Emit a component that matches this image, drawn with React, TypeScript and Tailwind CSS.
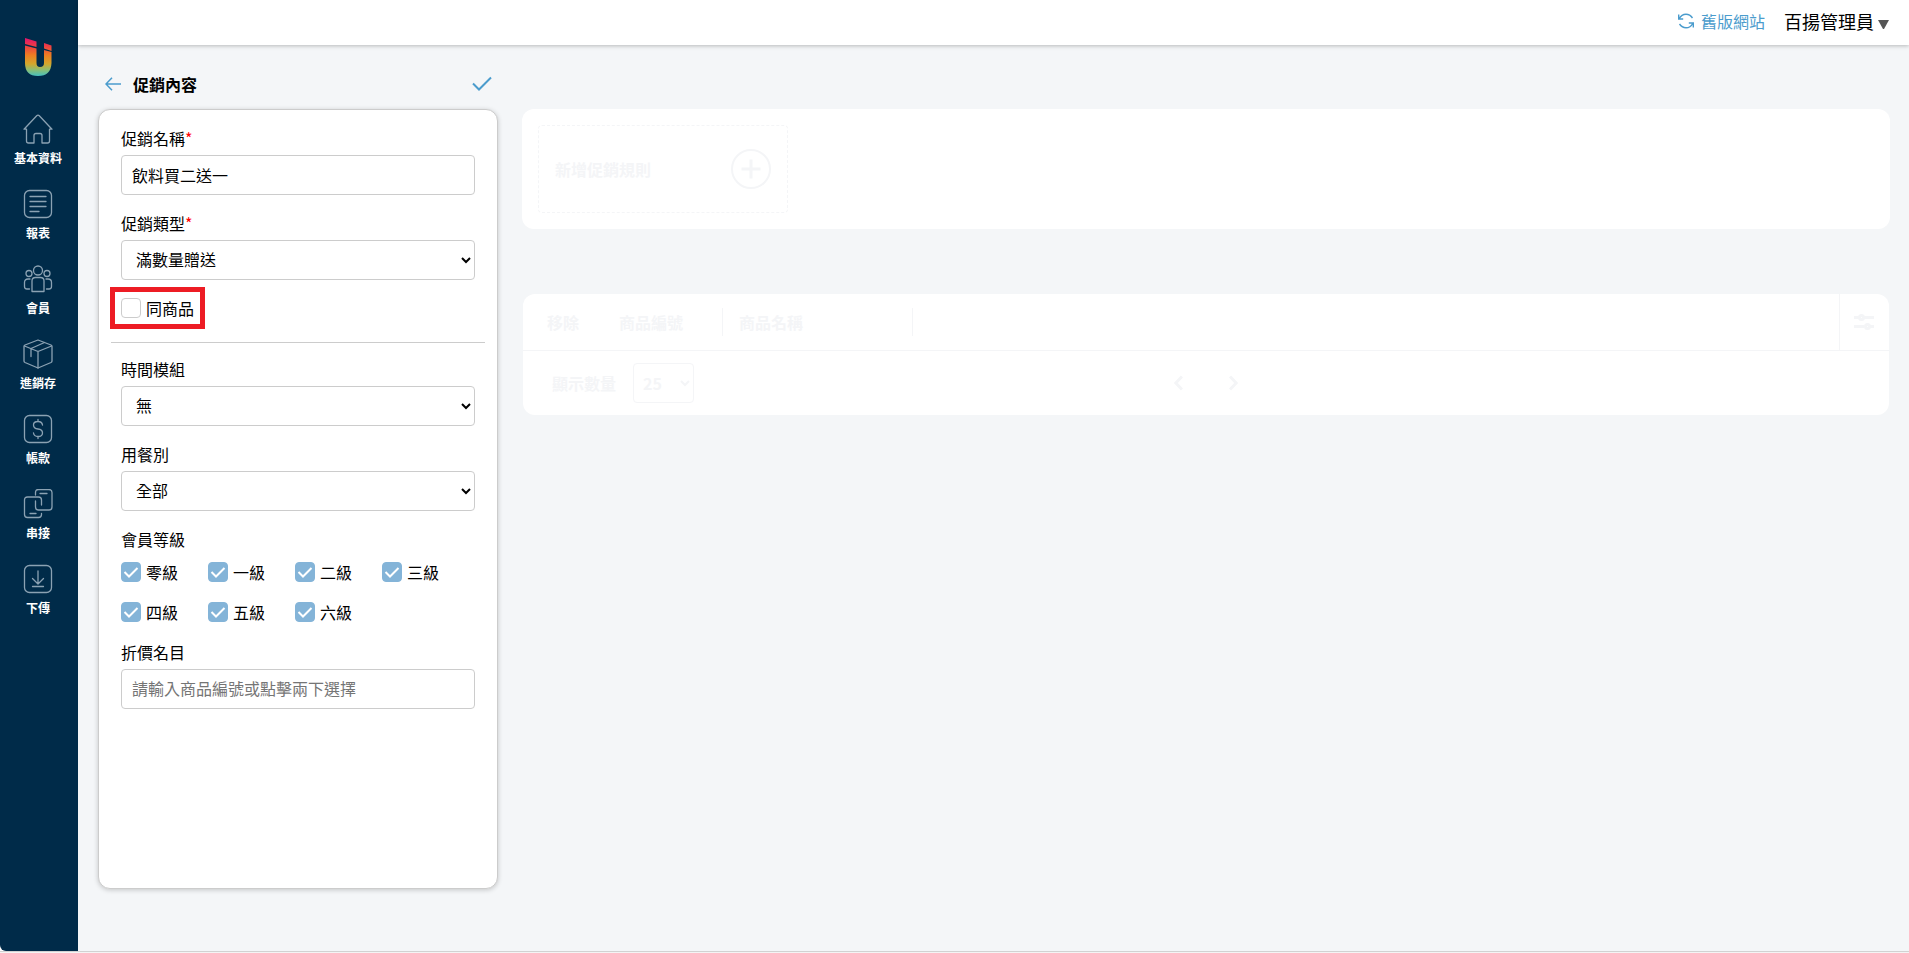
import React, { useState } from 'react';

type NavItem = {
  label: string;
  icon: React.ReactNode;
};

type FieldProps = {
  id: string;
  label: string;
  required?: boolean;
  children: React.ReactNode;
};

const NAV_ITEMS: NavItem[] = [
  {
    label: '基本資料',
    icon: <path d="M1 15.2 L13.7 1.8 Q15 .5 16.3 1.8 L29 15.2 H26.5 V27 Q26.5 29 24.5 29 H19 V21.5 Q19 19.5 17 19.5 H13 Q11 19.5 11 21.5 V29 H5.500 Q3.500 29 3.500 27 V15.200 Z" />,
  },
  {
    label: '報表',
    icon: (
      <>
        <rect x="1.5" y="1.5" width="27" height="27" rx="5" />
        <path d="M7 7.500 H23 M7 12.500 H23 M7 17.500 H23 M7 22.500 H16" />
      </>
    ),
  },
  {
    label: '會員',
    icon: (
      <>
        <circle cx="15" cy="6.500" r="4.500" />
        <circle cx="6" cy="9.500" r="3" />
        <circle cx="24" cy="9.500" r="3" />
        <path d="M9 27.500 V17 Q9 13.500 12.500 13.500 H17.500 Q21 13.500 21 17 V27.500 Z" />
        <path d="M7 15 H5 Q1.500 15 1.500 18.500 V22.500 Q1.500 25 4 25 H6.500 M23 15 H25 Q28.500 15 28.500 18.500 V22.500 Q28.500 25 26 25 H23.500" />
      </>
    ),
  },
  {
    label: '進銷存',
    icon: (
      <>
        <path d="M15 1 L28 6 Q29 6.500 29 7.500 V22 Q29 23 28 23.500 L15 29 L2 23.500 Q1 23 1 22 V7.500 Q1 6.500 2 6 Z" />
        <path d="M1.500 7 L15 12.500 L28.500 7 M15 12.500 V29 M21.500 3.500 L8 9.500 V17.500" />
      </>
    ),
  },
  {
    label: '帳款',
    icon: (
      <>
        <rect x="1.5" y="1.5" width="27" height="27" rx="5" />
        <path d="M19.500 11 Q19 7.500 15 7.500 Q10.500 7.500 10.500 11 Q10.500 14.500 15 15 Q19.500 15.500 19.500 19 Q19.500 22.500 15 22.500 Q11 22.500 10.500 19 M15 5.500 V7.500 M15 22.500 V24.500" />
      </>
    ),
  },
  {
    label: '串接',
    icon: (
      <>
        <path d="M12.500 6 V3.500 Q12.500 .5 15.500 .5 H26 Q29 .5 29 3.500 V18 Q29 21 26 21 H15.500 Q12.500 21 12.500 18 V12 M17 4.500 H24" />
        <path d="M18.500 16 V11 Q18.500 8 15.500 8 H4.500 Q1.500 8 1.500 11 V25.500 Q1.500 28.500 4.500 28.500 H15.500 Q18.500 28.500 18.500 25.500 V24.500 M7 24.500 H13" />
      </>
    ),
  },
  {
    label: '下傳',
    icon: (
      <>
        <rect x="1.5" y="1.5" width="27" height="27" rx="5" />
        <path d="M15 7 V20 M9.500 14.500 L15 20 L20.500 14.500 M9.500 22.500 H20.500" />
      </>
    ),
  },
];

const LEVELS = ['零級', '一級', '二級', '三級', '四級', '五級', '六級'];

const controlClass = 'block h-10 w-full rounded border border-[#cccccc] bg-white text-base text-black';

const Sidebar = () => (
  <nav className="flex w-[78px] shrink-0 flex-col items-center rounded-bl-md bg-[#002b49] pt-[38px] pr-[2px]">
    <a href="#" aria-label="首頁" className="mb-[38px] block">
      <svg width="28" height="38" viewBox="0 0 28 38">
        <defs>
          <linearGradient id="logo" x1="0" y1="0" x2="0" y2="1">
            <stop offset="0" stopColor="#e0146e" />
            <stop offset=".2" stopColor="#ec3b46" />
            <stop offset=".45" stopColor="#ee7d22" />
            <stop offset=".68" stopColor="#d3a72c" />
            <stop offset=".85" stopColor="#86bf78" />
            <stop offset="1" stopColor="#45c0c0" />
          </linearGradient>
        </defs>
        <path
          fill="url(#logo)"
          d="M1 0 L12.500 3.500 V9 L1 6 Z M20 5 L27.500 7.500 V13 L20 10.500 Z M1 7.500 L12.500 10.500 V25 Q12.500 29 16 29 Q20 29 20 25 V12 L27.500 14 V25 Q27 38 14 38 Q1 38 1 25 Z"
        />
      </svg>
    </a>
    <ul className="flex flex-col gap-[22px]">
      {NAV_ITEMS.map((item) => (
        <li key={item.label}>
          <a href="#" className="flex flex-col items-center gap-[5px] text-xs leading-[18px] font-bold text-white">
            <svg
              width="30"
              height="30"
              viewBox="0 0 30 30"
              fill="none"
              stroke="#8ba2b3"
              strokeWidth="1.3"
              strokeLinecap="round"
              strokeLinejoin="round"
            >
              {item.icon}
            </svg>
            {item.label}
          </a>
        </li>
      ))}
    </ul>
  </nav>
);

const TopBar = () => (
  <header className="z-10 flex h-[45px] shrink-0 items-center justify-end bg-white pr-5 pb-1 shadow-[0_1px_4px_rgba(0,0,0,0.25)]">
    <a href="#" className="mr-[19px] flex items-center gap-[7px] text-base leading-6 text-[#4b9ccd]">
      <svg width="16" height="16" viewBox="0 0 16 16" fill="none" stroke="currentColor" strokeWidth="1.4">
        <path d="M.7 1.500 V6 H5.200 M1.300 5.500 Q3.500 1.200 8 1.200 Q12 1.200 14.500 5" />
        <path d="M15.300 14.500 V10 H10.800 M14.700 10.500 Q12.500 14.800 8 14.800 Q4 14.800 1.500 11" />
      </svg>
      舊版網站
    </a>
    <button type="button" className="flex items-center gap-1 text-lg leading-6 text-black">
      百揚管理員
      <svg width="11" height="9" viewBox="0 0 11 9" fill="#555555" className="mt-2">
        <path d="M0 0 H11 L6 9 H5 Z" />
      </svg>
    </button>
  </header>
);

const Field = ({ id, label, required, children }: FieldProps) => (
  <div>
    <label htmlFor={id} className="mb-1 block leading-[25px]">
      {label}
      {required && <span className="text-[#ff0000]">*</span>}
    </label>
    {children}
  </div>
);

type CheckBoxProps = {
  label: string;
  checked: boolean;
  onChange: () => void;
};

const CheckBox = ({ label, checked, onChange }: CheckBoxProps) => (
  <label className="flex items-center gap-[5px]">
    <span className="grid size-5 shrink-0">
      <input
        type="checkbox"
        checked={checked}
        onChange={onChange}
        className="col-start-1 row-start-1 size-5 appearance-none rounded border border-[#cccccc] bg-white checked:border-[#84b4d8] checked:bg-[#84b4d8]"
      />
      {checked && (
        <svg
          viewBox="0 0 20 20"
          className="pointer-events-none col-start-1 row-start-1 size-5"
          fill="none"
          stroke="white"
          strokeWidth="2"
        >
          <path d="M3.500 10 L8 14.500 L16.500 6" />
        </svg>
      )}
    </span>
    {label}
  </label>
);

const PromotionForm = () => {
  const [name, setName] = useState('飲料買二送一');
  const [sameProduct, setSameProduct] = useState(false);
  const [levels, setLevels] = useState<string[]>(LEVELS);

  const toggleLevel = (level: string) => {
    setLevels((prev) => (prev.includes(level) ? prev.filter((l) => l !== level) : [...prev, level]));
  };

  return (
    <form className="flex w-[400px] shrink-0 flex-col">
      <div className="flex h-16 items-center px-1.5 pt-3.5">
        <button type="button" aria-label="返回" className="mr-3 ml-px text-[#4b9ccd]">
          <svg width="16" height="14" viewBox="0 0 16 14" fill="none" stroke="currentColor" strokeWidth="1.5">
            <path d="M7 .8 L1 7 L7 13.200 M1 7 H16" />
          </svg>
        </button>
        <h1 className="text-base leading-6 font-bold">促銷內容</h1>
        <button type="button" aria-label="儲存" className="ml-auto text-[#4b9ccd]">
          <svg width="20" height="16" viewBox="0 0 20 16" fill="none" stroke="currentColor" strokeWidth="2">
            <path d="M1 7.500 L7 13.500 L19 1.500" />
          </svg>
        </button>
      </div>
      <div className="flex-1 rounded-xl border border-[#cccccc] bg-white px-[22px] pt-4 shadow-[0_1px_5px_rgba(0,0,0,0.2)]">
        <div className="flex flex-col gap-4">
          <Field id="name" label="促銷名稱" required>
            <input
              id="name"
              type="text"
              value={name}
              onChange={(e) => setName(e.target.value)}
              className={`${controlClass} px-2.5`}
            />
          </Field>
          <Field id="type" label="促銷類型" required>
            <select id="type" className={`${controlClass} pb-0.5 pl-2.5`}>
              <option>滿數量贈送</option>
            </select>
          </Field>
        </div>
        <div className="mt-[7px] -ml-[11px] flex h-[42px] w-[95px] items-center border-[5px] border-[#ed1c24] pl-1.5">
          <CheckBox label="同商品" checked={sameProduct} onChange={() => setSameProduct(!sameProduct)} />
        </div>
        <hr className="-mx-2.5 mt-[13px] mb-3.5 border-[#cccccc]" />
        <div className="flex flex-col gap-4">
          <Field id="time" label="時間模組">
            <select id="time" className={`${controlClass} pb-0.5 pl-2.5`}>
              <option>無</option>
            </select>
          </Field>
          <Field id="meal" label="用餐別">
            <select id="meal" className={`${controlClass} pb-0.5 pl-2.5`}>
              <option>全部</option>
            </select>
          </Field>
          <fieldset>
            <legend className="leading-[25px]">會員等級</legend>
            <div className="grid auto-rows-[40px] grid-cols-[repeat(4,87px)]">
              {LEVELS.map((level) => (
                <CheckBox
                  key={level}
                  label={level}
                  checked={levels.includes(level)}
                  onChange={() => toggleLevel(level)}
                />
              ))}
            </div>
          </fieldset>
        </div>
        <div className="mt-2">
          <Field id="discount" label="折價名目">
            <input
              id="discount"
              type="text"
              placeholder="請輸入商品編號或點擊兩下選擇"
              className={`${controlClass} px-2.5 pb-0.5 placeholder:text-[#757575]`}
            />
          </Field>
        </div>
      </div>
    </form>
  );
};

const RulePanel = () => (
  <div className="flex min-w-0 flex-1 flex-col gap-[65px] pt-16 font-bold text-[#f4f5f7]">
    <section className="rounded-xl bg-white p-4">
      <button
        type="button"
        className="flex h-[88px] w-[250px] items-center justify-between rounded border border-dashed border-[#f4f5f7] px-4"
      >
        新增促銷規則
        <svg width="40" height="40" viewBox="0 0 40 40" fill="none" stroke="currentColor">
          <circle cx="20" cy="20" r="19" strokeWidth="2" />
          <path d="M20 10.500 V29.500 M10.500 20 H29.500" strokeWidth="3" />
        </svg>
      </button>
    </section>
    <section className="mx-px rounded-xl bg-white">
      <table className="w-full table-fixed border-collapse text-left">
        <thead>
          <tr className="h-14 border-b border-[#f4f5f7]">
            <th className="w-20 pl-6">移除</th>
            <th className="w-[120px] pl-4">
              <div className="border-r border-[#f4f5f7] leading-7">商品編號</div>
            </th>
            <th className="w-[190px] pl-4">
              <div className="border-r border-[#f4f5f7] leading-7">商品名稱</div>
            </th>
            <th />
            <th className="w-[50px] border-l border-[#f4f5f7]">
              <button type="button" aria-label="欄位設定" className="mx-auto block">
                <svg width="20" height="16" viewBox="0 0 20 16" fill="none" stroke="currentColor" strokeWidth="3">
                  <path d="M0 3.500 H5 M10 3.500 H20 M0 12.500 H10 M16 12.500 H20" />
                  <circle cx="7.500" cy="3.500" r="2" />
                  <circle cx="13.500" cy="12.500" r="2" />
                </svg>
              </button>
            </th>
          </tr>
        </thead>
      </table>
      <div className="grid h-16 grid-cols-[1fr_auto_1fr] items-center pl-[29px]">
        <div className="flex items-center gap-[17px]">
          <label htmlFor="page-size">顯示數量</label>
          <select id="page-size" className="h-10 w-[61px] rounded border border-[#f4f5f7] bg-white pl-[5px]">
            <option>25</option>
          </select>
        </div>
        <div className="-ml-[29px] flex gap-[46px]">
          <button type="button" aria-label="上一頁">
            <svg width="9" height="16" viewBox="0 0 9 16" fill="none" stroke="currentColor" strokeWidth="3">
              <path d="M8 1.500 L1.800 8 L8 14.500" />
            </svg>
          </button>
          <button type="button" aria-label="下一頁">
            <svg width="9" height="16" viewBox="0 0 9 16" fill="none" stroke="currentColor" strokeWidth="3">
              <path d="M1 1.500 L7.200 8 L1 14.500" />
            </svg>
          </button>
        </div>
      </div>
    </section>
  </div>
);

const App = () => (
  <div className="flex min-h-screen flex-col bg-[#f4f4f4] pb-px font-['Noto_Sans_CJK_TC',sans-serif] text-base leading-6 text-black">
    <div className="flex flex-1 border-b border-[#d2d2d2] bg-white">
      <Sidebar />
      <div className="flex min-w-0 flex-1 flex-col bg-[#f4f6f8]">
        <TopBar />
        <main className="flex flex-1 gap-6 pr-[19px] pb-[62px] pl-5">
          <PromotionForm />
          <RulePanel />
        </main>
      </div>
    </div>
  </div>
);

export default App;
